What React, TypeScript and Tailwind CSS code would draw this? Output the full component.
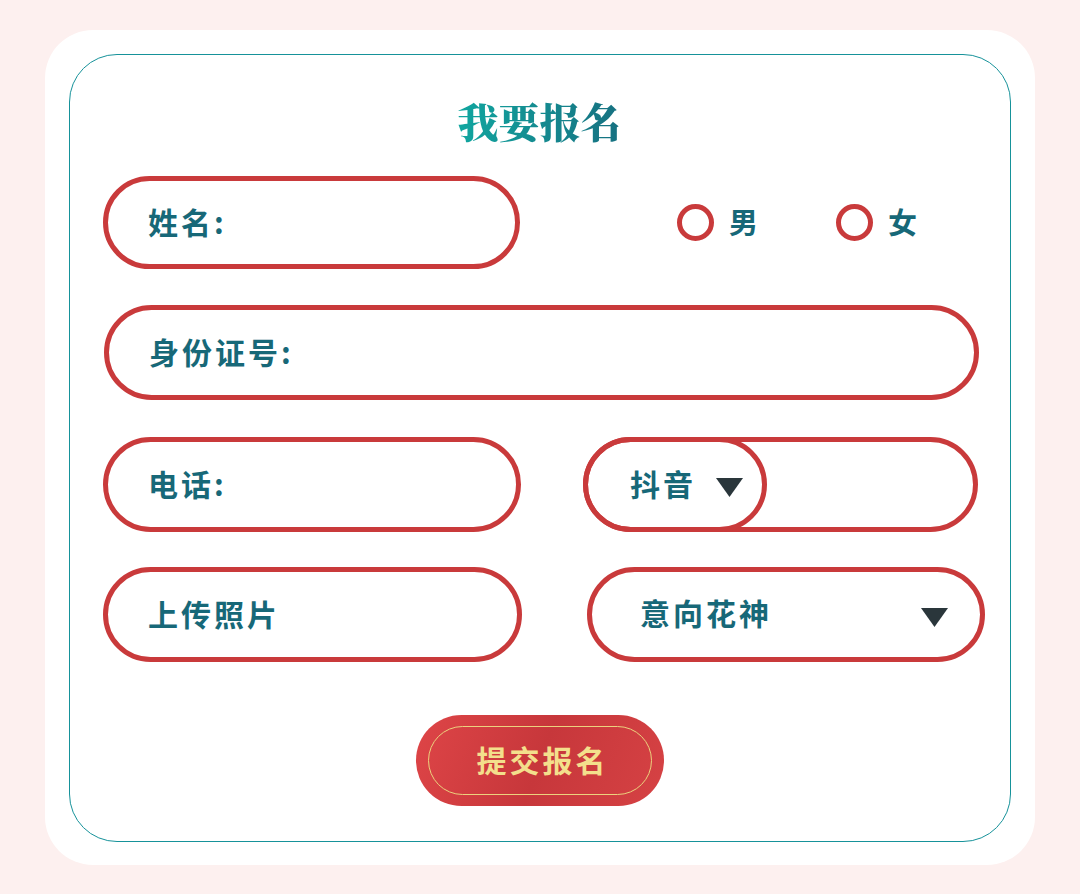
import React from 'react';

const sans = { fontFamily: '"Noto Sans CJK SC", "Noto Sans", sans-serif' };

const Caret: React.FC = () => (
  <svg width="27" height="19" viewBox="0 0 27 19" className="shrink-0 mt-[6px]">
    <path d="M0 0H27L13.5 19Z" fill="#2a363b" />
  </svg>
);

const Radio: React.FC<{ label: string }> = ({ label }) => (
  <div className="flex items-center">
    <span className="w-[37px] h-[37px] rounded-full border-[5px] border-[#c93a3b] box-border" />
    <span className="ml-[15px] text-[29px] font-bold text-[#176878] leading-none -translate-y-[1px]">{label}</span>
  </div>
);

const Field: React.FC<{ label: string; className: string }> = ({ label, className }) => (
  <div
    className={`flex items-center rounded-full border-[5px] border-[#c93a3b] box-border pl-[40px] ${className}`}
  >
    <span className="text-[30px] font-bold tracking-[3px] text-[#176878] leading-none -translate-y-[2px]">{label}</span>
  </div>
);

const App: React.FC = () => {
  return (
    <div className="min-h-screen bg-[#fdf0ef] pt-[30px] px-[45px]" style={sans}>
      {/* Card */}
      <div className="bg-white rounded-[48px] p-6 h-[835px]">
        <div className="border border-[#16929a] rounded-[48px] h-[788px] pl-[33px]">
          {/* Title */}
          <h1
            className="mt-[44px] h-[44px] text-center text-[41px] leading-[44px] font-black bg-gradient-to-r from-[#10a7a0] to-[#166f80] bg-clip-text text-transparent w-[170px] mx-auto -translate-x-[17px]"
            style={{ fontFamily: '"Noto Serif CJK SC", "Noto Sans CJK SC", serif' }}
          >
            我要报名
          </h1>

          {/* Row 1 */}
          <div className="mt-[33px] flex items-center">
            <Field label="姓名:" className="w-[417px] h-[93px]" />
            <div className="ml-[157px]">
              <Radio label="男" />
            </div>
            <div className="ml-[78px]">
              <Radio label="女" />
            </div>
          </div>

          {/* Row 2 */}
          <div className="mt-[36px] flex">
            <Field label="身份证号:" className="ml-[1px] w-[875px] h-[95px]" />
          </div>

          {/* Row 3 */}
          <div className="mt-[37px] flex">
            <Field label="电话:" className="w-[418px] h-[95px]" />
            <div className="ml-[62px] w-[395px] h-[95px] rounded-full border-[5px] border-[#c93a3b] box-border flex">
              <div className="-m-[5px] w-[184px] h-[95px] rounded-full border-[5px] border-[#c93a3b] box-border flex items-center pl-[42px]">
                <span className="text-[30px] font-bold tracking-[3px] text-[#176878] leading-none -translate-y-[2px]">抖音</span>
                <span className="ml-[20px]">
                  <Caret />
                </span>
              </div>
            </div>
          </div>

          {/* Row 4 */}
          <div className="mt-[35px] flex">
            <Field label="上传照片" className="w-[419px] h-[95px]" />
            <div className="ml-[65px] w-[398px] h-[95px] rounded-full border-[5px] border-[#c93a3b] box-border flex items-center justify-between pl-[48px] pr-[32px]">
              <span className="text-[30px] font-bold tracking-[3px] text-[#176878] leading-none -translate-y-[3px]">意向花神</span>
              <Caret />
            </div>
          </div>

          {/* Submit */}
          <div className="mt-[53px] flex justify-center -translate-x-[17px]">
            <button className="w-[248px] h-[91px] rounded-full bg-[linear-gradient(110deg,#de4547_0%,#c7373b_50%,#d64244_100%)] p-[11px_12px]">
              <span className="flex items-center justify-center w-full h-full rounded-full border border-[#ecd27e]">
                <span className="text-[30px] font-bold tracking-[3px] text-[#f3df8c] leading-none pl-[6px] -translate-y-[2px]">提交报名</span>
              </span>
            </button>
          </div>
        </div>
      </div>
    </div>
  );
};

export default App;
